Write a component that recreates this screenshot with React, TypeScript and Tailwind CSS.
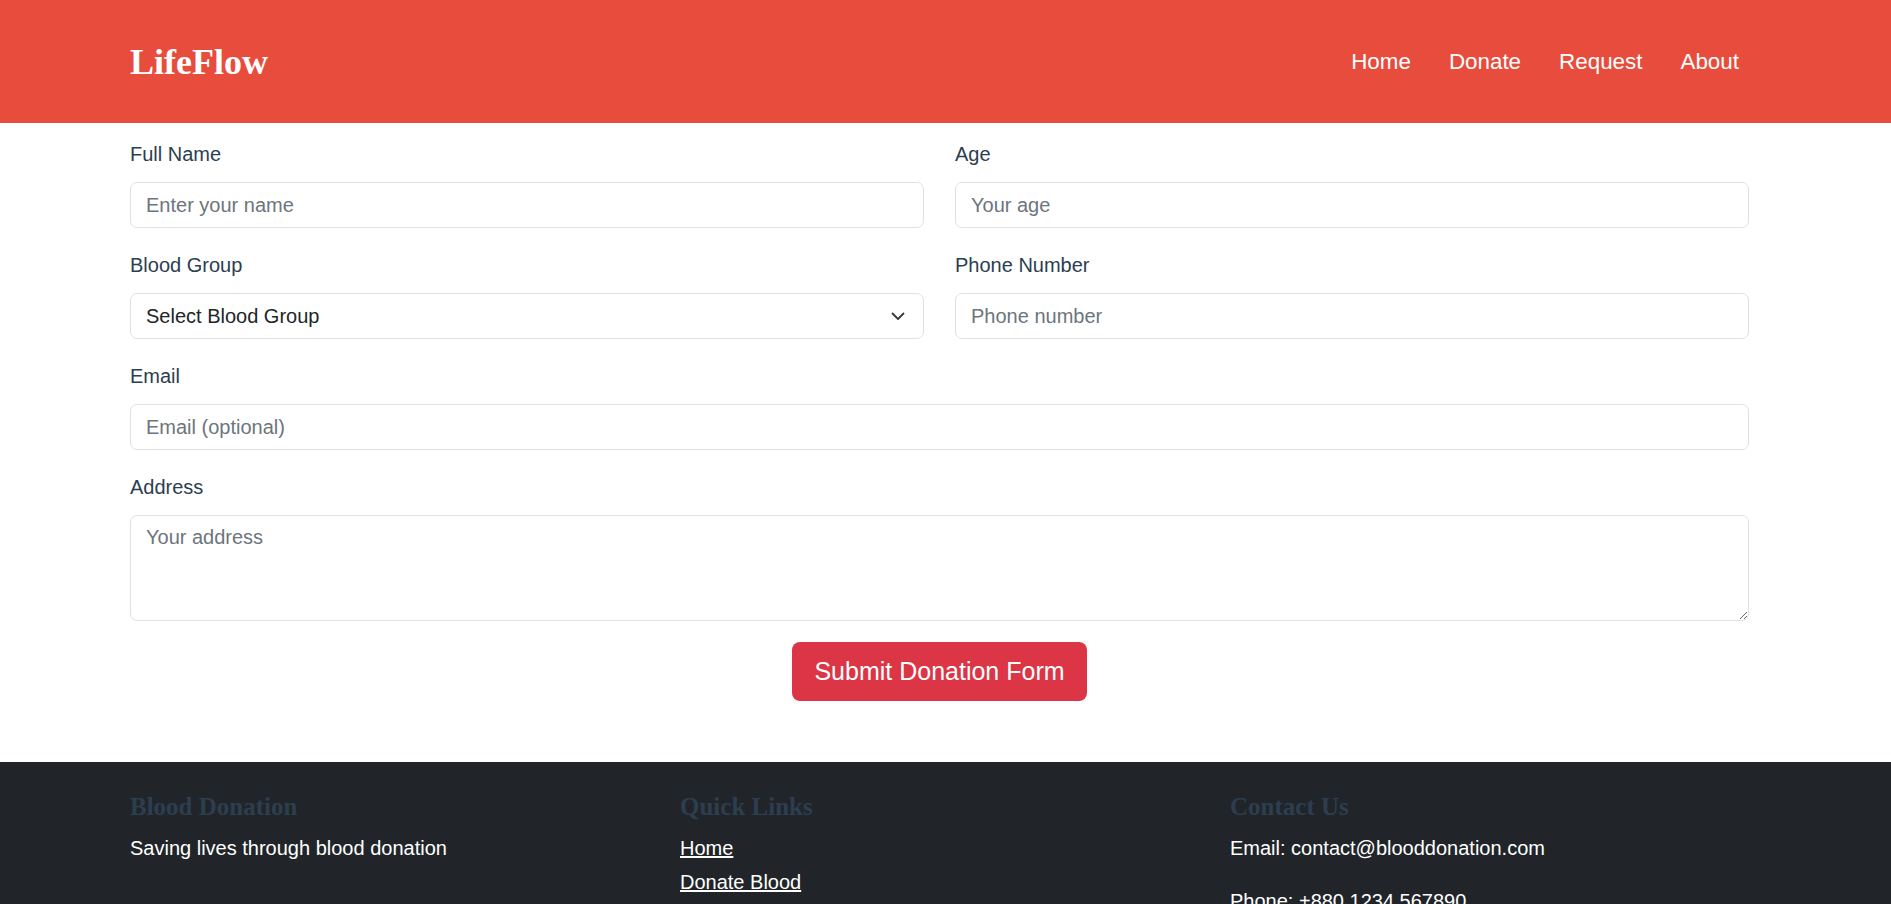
import React from 'react';

const inputClass =
  'h-[46px] w-full rounded-[7px] border border-[#dee2e6] bg-white px-[15px] text-[20px] text-[#212529] outline-none placeholder:text-[#6c757d]';

const headingClass =
  "mb-[13px] font-['Liberation_Serif','Times_New_Roman',serif] text-[25px] font-bold leading-[29px] text-[#2c3e50]";

const Field = ({
  label,
  className = '',
  children,
}: {
  label: string;
  className?: string;
  children: React.ReactNode;
}) => (
  <div className={`flex flex-col ${className}`}>
    <label className="mb-[14px] text-[20px] leading-[28px] text-[#2c3e50]">
      {label}
    </label>
    {children}
  </div>
);

const App = () => {
  return (
    <div className="min-h-screen w-full bg-white font-['Liberation_Sans',Arial,sans-serif]">
      {/* header */}
      <header className="flex h-[123px] w-full items-center bg-[#e74c3c]">
        <div className="ml-[130px] flex w-[1619px] items-center justify-between">
          <h1 className="font-['Liberation_Serif','Times_New_Roman',serif] text-[36px] font-bold leading-none text-white">
            LifeFlow
          </h1>
          <nav className="flex items-center gap-[18px] text-[22.4px] text-white">
            <a href="#" className="px-[10px]">Home</a>
            <a href="#" className="px-[10px]">Donate</a>
            <a href="#" className="px-[10px]">Request</a>
            <a href="#" className="px-[10px]">About</a>
          </nav>
        </div>
      </header>

      {/* form */}
      <main className="ml-[130px] w-[1619px] pt-[17px] pb-[61px]">
        <form className="grid grid-cols-2 gap-x-[31px] gap-y-[23px]">
          <Field label="Full Name">
            <input type="text" placeholder="Enter your name" className={inputClass} />
          </Field>
          <Field label="Age">
            <input type="number" placeholder="Your age" className={inputClass} />
          </Field>
          <Field label="Blood Group">
            <div className="relative">
              <select defaultValue="" className={`${inputClass} appearance-none`}>
                <option value="">Select Blood Group</option>
                <option>A+</option>
                <option>A-</option>
                <option>B+</option>
                <option>B-</option>
                <option>AB+</option>
                <option>AB-</option>
                <option>O+</option>
                <option>O-</option>
              </select>
              <svg
                className="pointer-events-none absolute right-[18px] top-1/2 -translate-y-1/2"
                width="16"
                height="16"
                viewBox="0 0 16 16"
                fill="none"
              >
                <path
                  d="m2 5 6 6 6-6"
                  stroke="#343a40"
                  strokeWidth="1.8"
                  strokeLinejoin="round"
                />
              </svg>
            </div>
          </Field>
          <Field label="Phone Number">
            <input type="tel" placeholder="Phone number" className={inputClass} />
          </Field>
          <Field label="Email" className="col-span-2">
            <input type="email" placeholder="Email (optional)" className={inputClass} />
          </Field>
          <Field label="Address" className="col-span-2">
            <textarea
              placeholder="Your address"
              className="h-[106px] w-full rounded-[7px] border border-[#dee2e6] bg-white px-[15px] py-[7px] text-[20px] leading-[28.8px] text-[#212529] outline-none placeholder:text-[#6c757d]"
            />
          </Field>
          <div className="col-span-2 -mt-[2px] flex justify-center">
            <button
              type="button"
              className="h-[59px] rounded-[8px] bg-[#dc3545] px-[22px] text-[25px] text-white"
            >
              Submit Donation Form
            </button>
          </div>
        </form>
      </main>

      {/* footer */}
      <footer className="w-full bg-[#212529] pt-[30px] pb-[40px]">
        <div className="ml-[130px] grid w-[1619px] grid-cols-3 gap-[31px] text-[20px] leading-[28px] text-white">
          <div>
            <h5 className={headingClass}>Blood Donation</h5>
            <p>Saving lives through blood donation</p>
          </div>
          <div>
            <h5 className={headingClass}>Quick Links</h5>
            <ul className="flex flex-col gap-[6px]">
              <li><a href="#" className="underline">Home</a></li>
              <li><a href="#" className="underline">Donate Blood</a></li>
              <li><a href="#" className="underline">Request Blood</a></li>
              <li><a href="#" className="underline">About Us</a></li>
            </ul>
          </div>
          <div>
            <h5 className={headingClass}>Contact Us</h5>
            <p className="mb-[25px]">Email: contact@blooddonation.com</p>
            <p className="mb-[25px]">Phone: +880 1234 567890</p>
          </div>
        </div>
      </footer>
    </div>
  );
};

export default App;
